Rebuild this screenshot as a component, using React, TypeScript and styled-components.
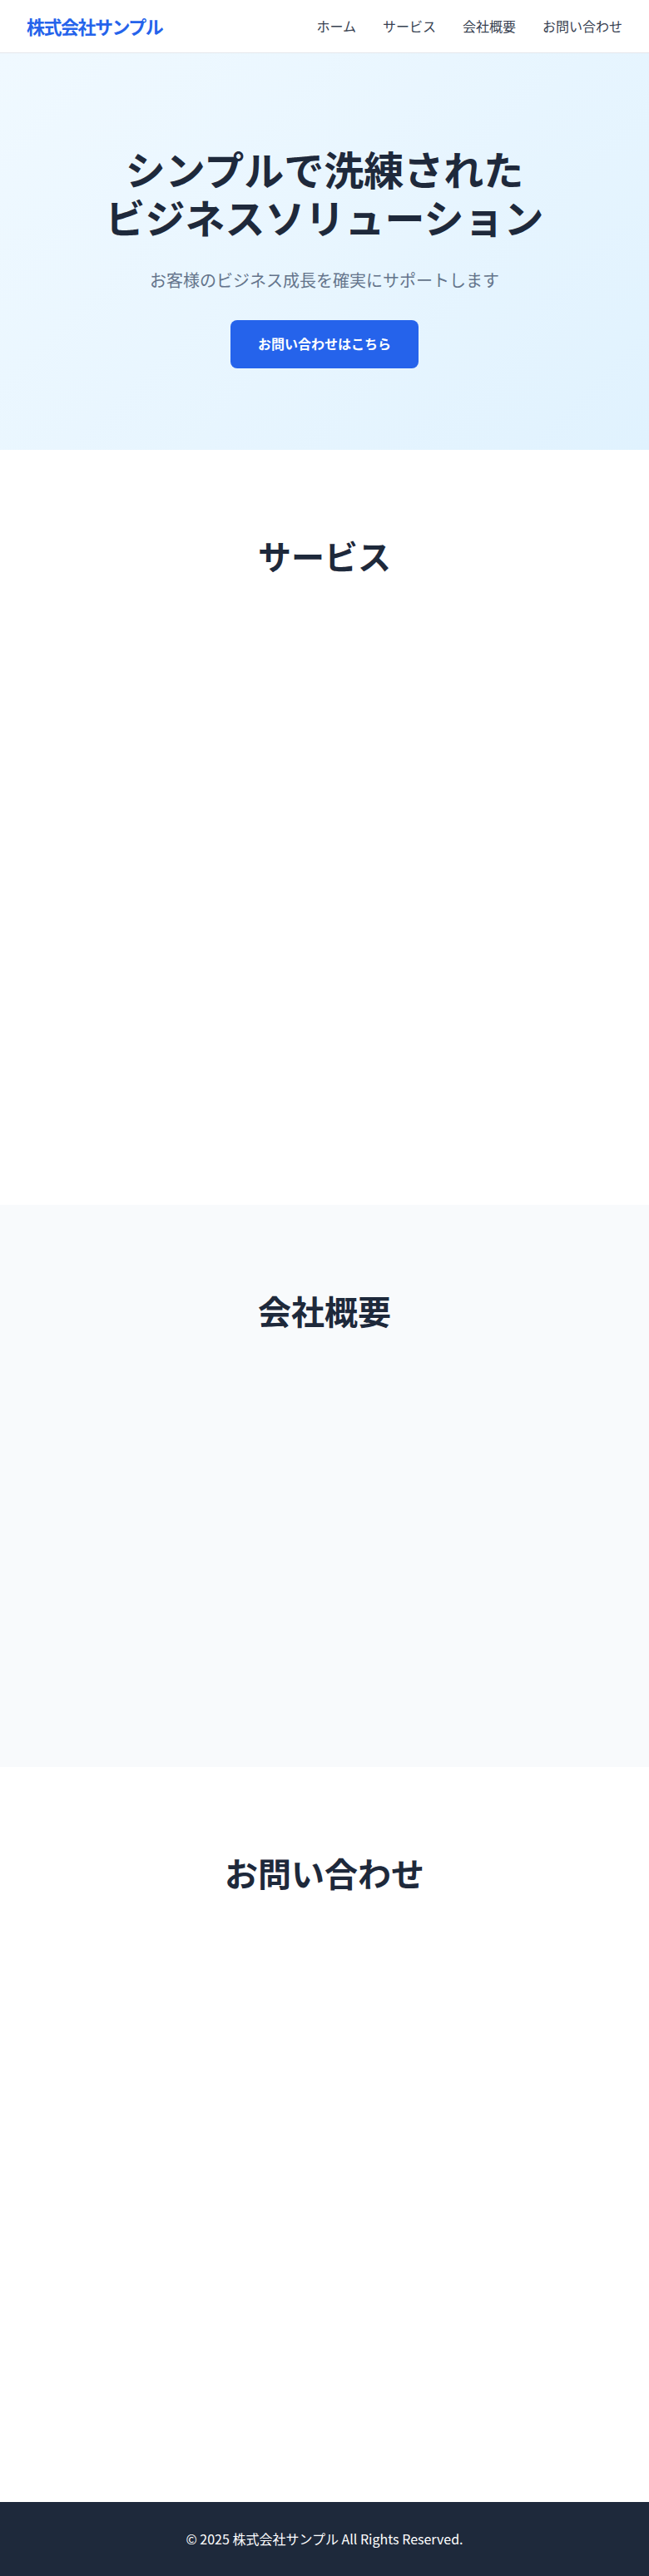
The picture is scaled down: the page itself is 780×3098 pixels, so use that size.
import React from "react";
import styled, { createGlobalStyle } from "styled-components";

const GlobalStyle = createGlobalStyle`
  * { box-sizing: border-box; }
  html, body { margin: 0; padding: 0; }
  body {
    font-family: "Noto Sans CJK JP", "Noto Sans", sans-serif;
    line-height: 1.6;
    color: #1e293b;
    background: #ffffff;
  }
`;

const Header = styled.header`
  height: 64px;
  padding: 0 32px;
  display: flex;
  align-items: center;
  justify-content: space-between;
  background: #ffffff;
  border-bottom: 1px solid #e5e7eb;
`;

const Logo = styled.div`
  font-size: 22px;
  font-weight: 700;
  color: #2563eb;
  line-height: 1.2;
  letter-spacing: -1.5px;
`;

const Nav = styled.nav`
  display: flex;
  gap: 32px;
`;

const NavLink = styled.a`
  font-size: 16px;
  color: #374151;
  text-decoration: none;
`;

const Hero = styled.section`
  height: 477px;
  padding: 110px 32px 0;
  display: flex;
  flex-direction: column;
  align-items: center;
  text-align: center;
  background: linear-gradient(135deg, #f0f9ff 0%, #e0f2fe 100%);
`;

const HeroTitle = styled.h1`
  margin: 0 0 32px;
  font-size: 48px;
  font-weight: 700;
  line-height: 1.2;
  color: #1e293b;
`;

const HeroSubtitle = styled.p`
  margin: 0 0 32px;
  font-size: 20px;
  line-height: 1.6;
  color: #64748b;
`;

const PrimaryButton = styled.a`
  display: inline-flex;
  align-items: center;
  justify-content: center;
  height: 58px;
  padding: 0 33px;
  border-radius: 8px;
  background: #2563eb;
  color: #ffffff;
  font-size: 16px;
  font-weight: 700;
  text-decoration: none;
`;

const Section = styled.section<{ $height: number; $alt?: boolean }>`
  height: ${(p) => p.$height}px;
  padding: 95px 32px 0;
  background: ${(p) => (p.$alt ? "#f8fafc" : "#ffffff")};
  text-align: center;
`;

const SectionTitle = styled.h2`
  margin: 0;
  font-size: 40px;
  font-weight: 700;
  line-height: 64px;
  color: #1e293b;
`;

const Footer = styled.footer`
  height: 89px;
  display: flex;
  align-items: center;
  justify-content: center;
  background: #1e293b;
  color: #ffffff;
  font-size: 16px;
`;

export default function App() {
  return (
    <>
      <GlobalStyle />
      <Header>
        <Logo>株式会社サンプル</Logo>
        <Nav>
          <NavLink href="#home">ホーム</NavLink>
          <NavLink href="#services">サービス</NavLink>
          <NavLink href="#about">会社概要</NavLink>
          <NavLink href="#contact">お問い合わせ</NavLink>
        </Nav>
      </Header>
      <Hero id="home">
        <HeroTitle>
          シンプルで洗練された
          <br />
          ビジネスソリューション
        </HeroTitle>
        <HeroSubtitle>お客様のビジネス成長を確実にサポートします</HeroSubtitle>
        <PrimaryButton href="#contact">お問い合わせはこちら</PrimaryButton>
      </Hero>
      <Section id="services" $height={908}>
        <SectionTitle>サービス</SectionTitle>
      </Section>
      <Section id="about" $height={676} $alt>
        <SectionTitle>会社概要</SectionTitle>
      </Section>
      <Section id="contact" $height={884}>
        <SectionTitle>お問い合わせ</SectionTitle>
      </Section>
      <Footer>© 2025 株式会社サンプル All Rights Reserved.</Footer>
    </>
  );
}
